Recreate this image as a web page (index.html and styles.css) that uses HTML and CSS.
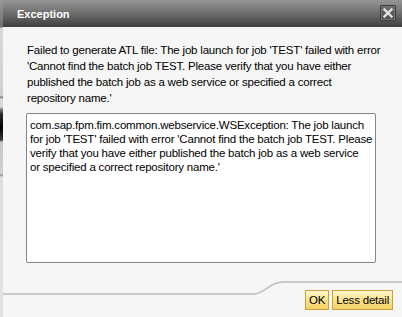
FILE: index.html
```html
<!DOCTYPE html>
<html>
<head>
	<title>Exception</title>
	<link rel="stylesheet" href="styles.css">
</head>
<body>
	<div class="page">
		<div class="backdrop"></div>

		<div class="dialog">
			<div class="titlebar">
				<span class="title">Exception</span>
				<span class="close" title="Close">
					<svg width="10" height="10" viewBox="0 0 10 10">
						<path d="M1.5 1.5 L8.5 8.5 M8.5 1.5 L1.5 8.5" stroke="#e2e2e2" stroke-width="2.4" stroke-linecap="square"/>
					</svg>
				</span>
			</div>

			<div class="content">
				<p class="message">Failed to generate ATL file: The job launch for job 'TEST' failed with error<br>
					'Cannot find the batch job TEST. Please verify that you have either<br>
					published the batch job as a web service or specified a correct<br>
					repository name.'</p>

				<textarea class="details" readonly>com.sap.fpm.fim.common.webservice.WSException: The job launch
for job 'TEST' failed with error 'Cannot find the batch job TEST. Please
verify that you have either published the batch job as a web service
or specified a correct repository name.'</textarea>
			</div>

			<div class="footer">
				<!-- divider with the step up behind the buttons -->
				<svg class="divider" width="399" height="40" viewBox="0 0 399 40">
					<path d="M0 31 L250 31 C262 31 266 19 280 19 L399 19" fill="none" stroke="#bdbdbd" stroke-width="1.3"/>
				</svg>
				<div class="buttons">
					<button class="btn">OK</button>
					<button class="btn">Less detail</button>
				</div>
			</div>
		</div>
	</div>
</body>
</html>
```

FILE: styles.css
```css
body {
	margin: 0;
	font-family: "Liberation Sans", Arial, sans-serif;
	font-size: 11.5px;
	letter-spacing: -0.2px;
	background-color: #f6f6f6;
}

.page {
	display: flex;
	width: 402px;
	height: 317px;
	overflow: hidden;
}

.backdrop {
	width: 3px;
	flex-shrink: 0;
	background: linear-gradient(to bottom,
		#9a9a9a 0px, #6e6e6e 27px,
		#d8d8d8 28px, #d0d0d0 96px,
		#707070 97px, #dcdcdc 99px,
		#d8d8d8 107px, #8a8a8a 109px,
		#2a2a2a 114px, #000000 128px, #3a3a3a 140px,
		#c8c8c8 142px, #d0d0d0 174px,
		#8a8a8a 175px, #dedede 177px,
		#e2e2e2 317px);
}

.dialog {
	flex: 1;
	display: flex;
	flex-direction: column;
	background-color: #f6f6f6;
}

.titlebar {
	height: 27px;
	display: flex;
	align-items: center;
	justify-content: space-between;
	padding: 0 6px 0 14px;
	background: linear-gradient(to bottom, #959595 0%, #767676 40%, #555555 75%, #3e3e3e 100%);
	box-sizing: border-box;
}

.title {
	color: #ffffff;
	font-weight: bold;
	font-size: 11px;
	letter-spacing: 0;
}

.close {
	width: 16px;
	height: 16px;
	box-sizing: border-box;
	border: 1px solid #393939;
	border-radius: 1px;
	background: linear-gradient(to bottom, #6a6a6a, #4c4c4c);
	box-shadow: inset 0 0 0 1px #777777;
	display: flex;
	align-items: center;
	justify-content: center;
	margin-bottom: 1px;
}

.content {
	padding: 15px 0 0 23px;
}

.message {
	margin: 0 0 7px 1px;
	width: 370px;
	line-height: 16px;
	color: #000000;
	white-space: nowrap;
}

.details {
	display: block;
	width: 350px;
	height: 150px;
	box-sizing: border-box;
	margin: 0;
	padding: 4px 3px 2px 3px;
	border: 1px solid #85858f;
	border-radius: 2px;
	background-color: #ffffff;
	font-family: "Liberation Sans", Arial, sans-serif;
	font-size: 11.5px;
	letter-spacing: -0.2px;
	line-height: 14px;
	color: #000000;
	white-space: pre;
	resize: none;
	overflow: hidden;
	outline: none;
}

.footer {
	position: relative;
	flex: 1;
	display: flex;
	justify-content: flex-end;
	align-items: flex-start;
	padding: 27px 9px 0 0;
}

.divider {
	position: absolute;
	left: 0;
	top: 0;
}

.buttons {
	position: relative;
	display: flex;
	gap: 3px;
}

.btn {
	height: 20px;
	padding: 0 3px;
	margin: 0;
	font-family: "Liberation Sans", Arial, sans-serif;
	font-size: 11.5px;
	letter-spacing: -0.2px;
	color: #000000;
	border: 1px solid #c7a23a;
	border-radius: 0;
	background: linear-gradient(to bottom, #fff6c8 0%, #fbe594 45%, #f3d062 100%);
}
```
